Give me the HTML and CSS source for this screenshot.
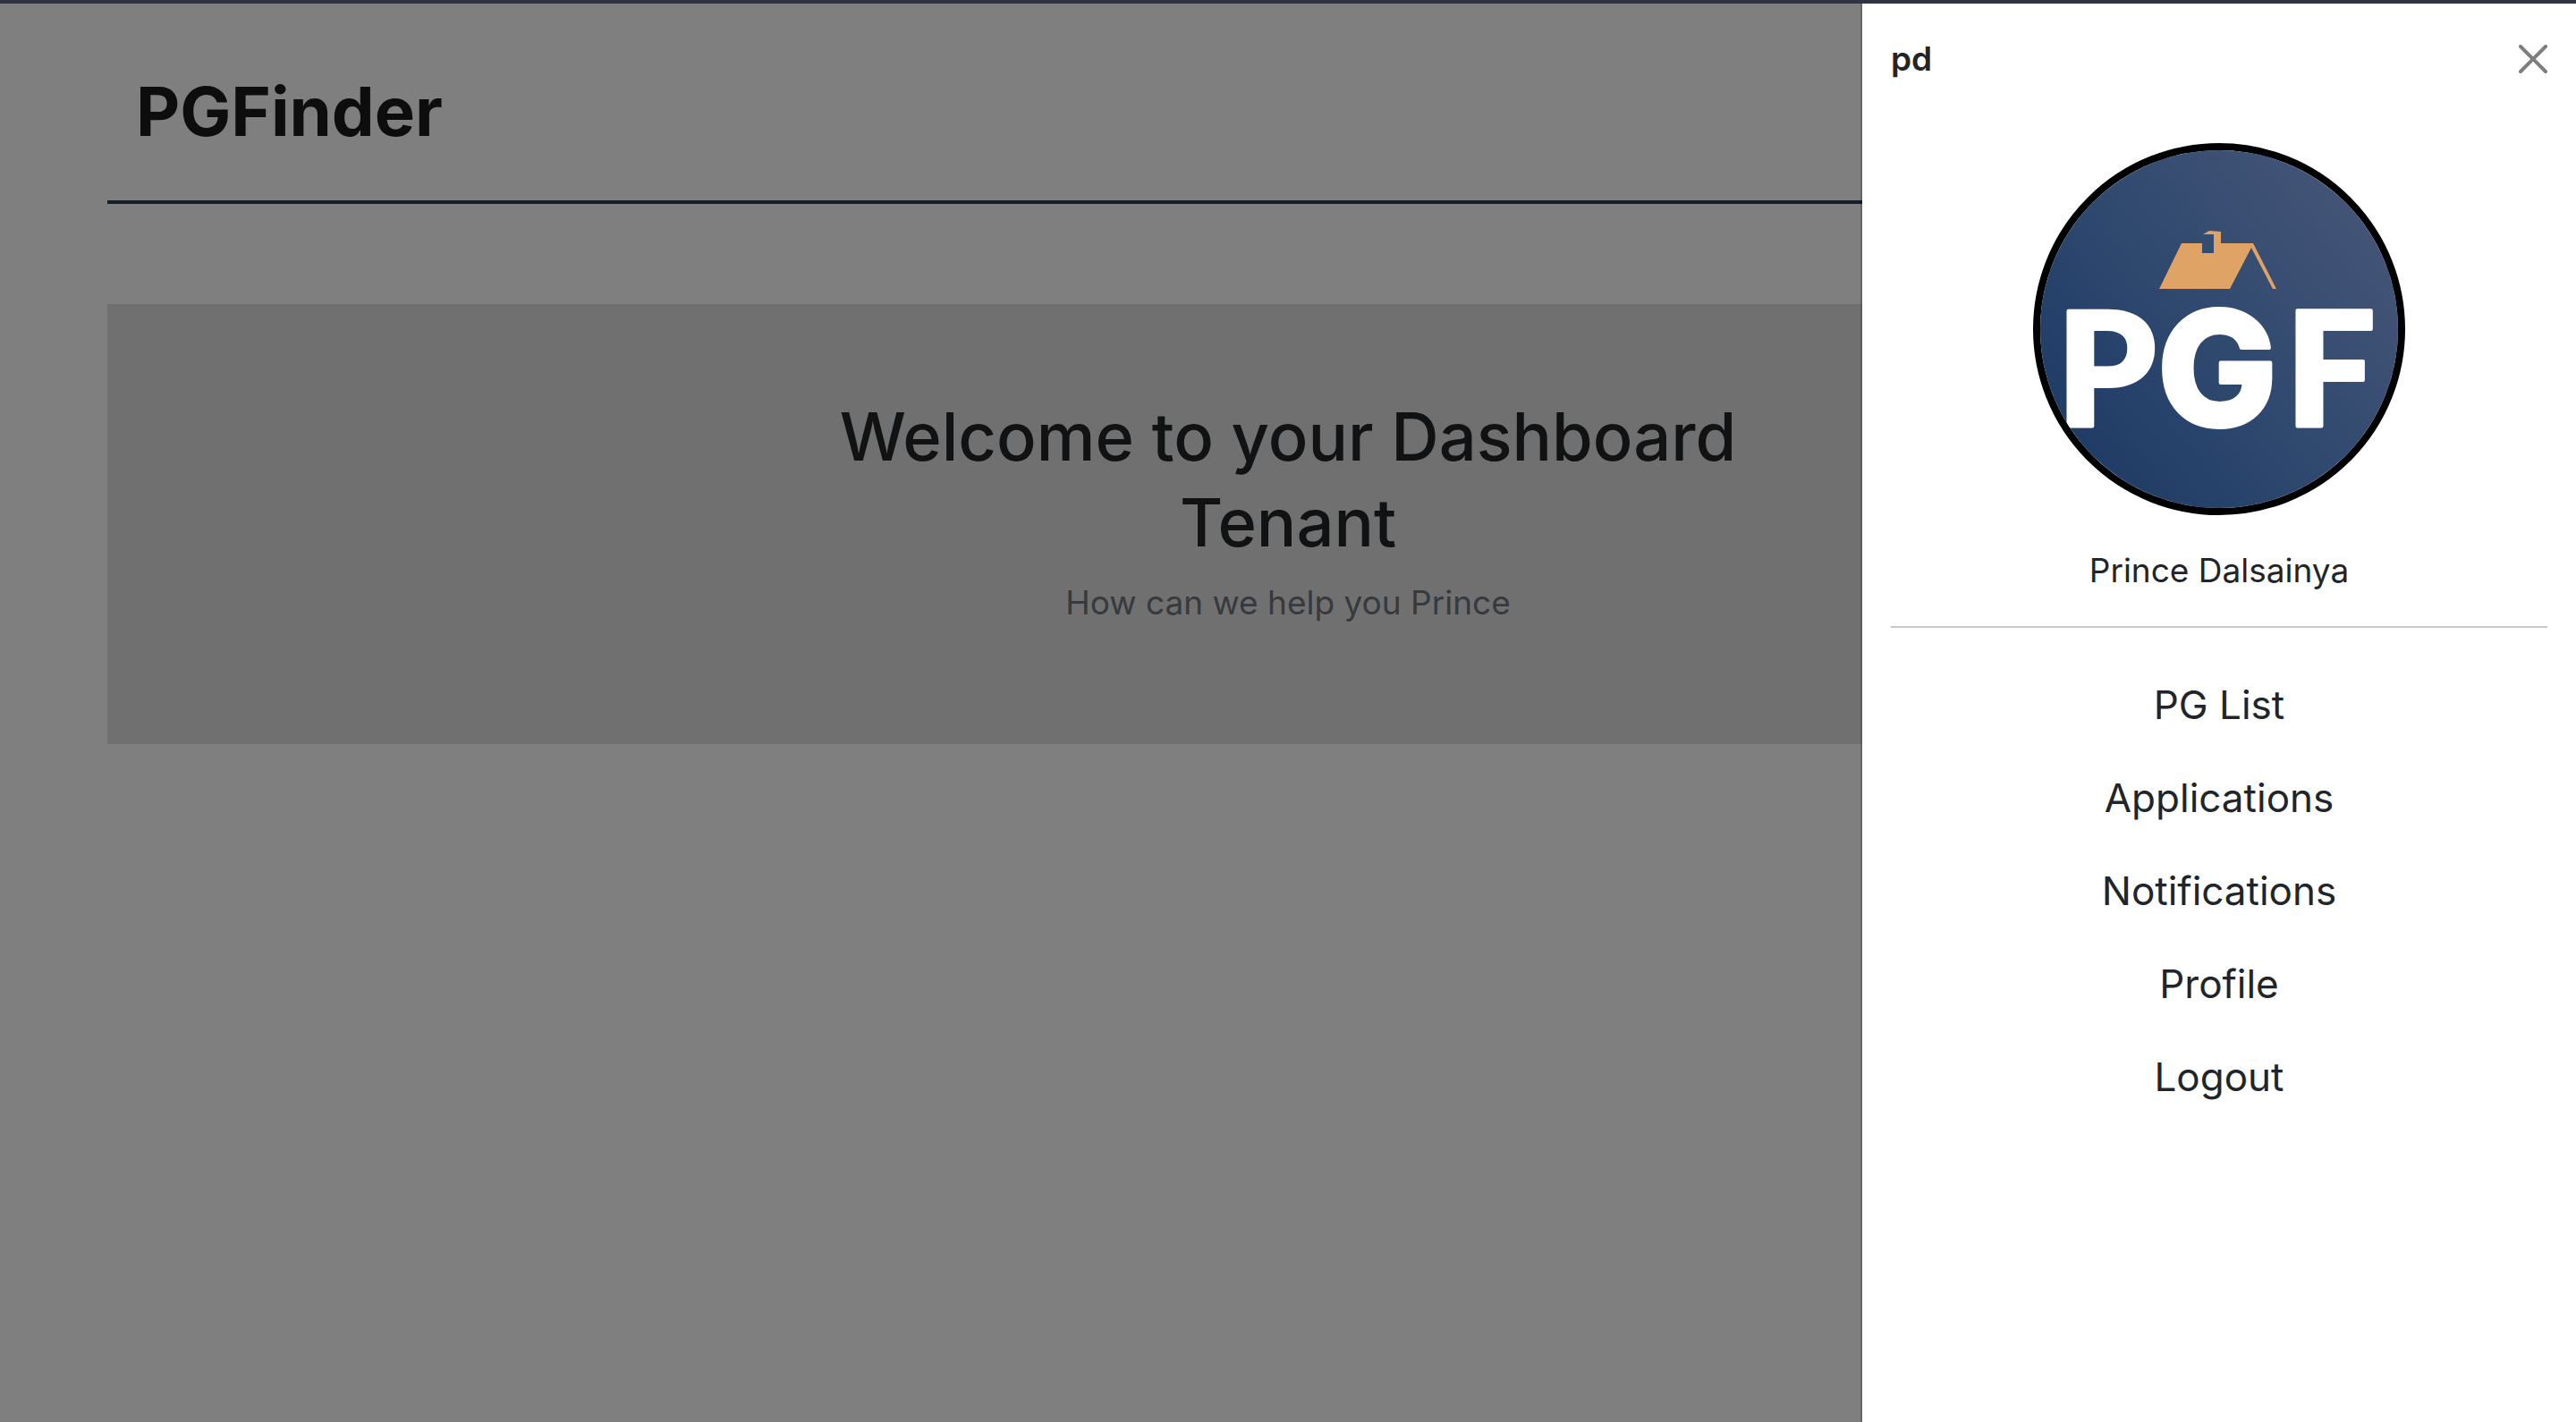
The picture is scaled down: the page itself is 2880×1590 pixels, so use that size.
FILE: index.html
```html
<!DOCTYPE html>
<html lang="en">
<head>
<meta charset="utf-8">
<title>PGFinder</title>
<link rel="stylesheet" href="styles.css">
</head>
<body>
<div class="page">
  <header class="site-header">
    <h1 class="brand">PGFinder</h1>
  </header>
  <main class="hero">
    <h2 class="hero-title">Welcome to your Dashboard<br>Tenant</h2>
    <p class="hero-text">How can we help you Prince</p>
  </main>
</div>
<div class="backdrop"></div>
<aside class="drawer" aria-labelledby="drawer-title">
  <div class="drawer-header">
    <h2 class="drawer-title" id="drawer-title">pd</h2>
    <button class="close" type="button" aria-label="Close">
      <svg class="close-icon" viewBox="0 0 16 16" aria-hidden="true"><path d="M.293.293a1 1 0 0 1 1.414 0L8 6.586 14.293.293a1 1 0 1 1 1.414 1.414L9.414 8l6.293 6.293a1 1 0 0 1-1.414 1.414L8 9.414l-6.293 6.293a1 1 0 0 1-1.414-1.414L6.586 8 .293 1.707a1 1 0 0 1 0-1.414z"/></svg>
    </button>
  </div>
  <div class="drawer-body">
    <svg class="avatar" viewBox="0 0 400 400" role="img" aria-label="PGF">
      <defs>
        <linearGradient id="sky" x1="0.1" y1="0.85" x2="0.9" y2="0.2">
          <stop offset="0" stop-color="#1f3c66"/>
          <stop offset="0.5" stop-color="#30496f"/>
          <stop offset="1" stop-color="#435476"/>
        </linearGradient>
      </defs>
      <rect width="400" height="400" fill="url(#sky)"/>
      <path fill="#dfa366" d="M133 155 158 104H181V115H194V94H182L189 90 202 91V104H238L264 155H260L236 109 212 155Z"/>
      <text class="logo-text" y="308" x="18 131 274">P<tspan class="logo-round">G</tspan>F</text>
    </svg>
    <p class="user-name">Prince Dalsainya</p>
    <hr class="divider">
    <nav class="menu">
      <a class="menu-link" href="#pg-list">PG List</a>
      <a class="menu-link" href="#applications">Applications</a>
      <a class="menu-link" href="#notifications">Notifications</a>
      <a class="menu-link" href="#profile">Profile</a>
      <a class="menu-link" href="#logout">Logout</a>
    </nav>
  </div>
</aside>
</body>
</html>
```

FILE: styles.css
```css
* { box-sizing: border-box; }

body {
  margin: 0;
  border-top: 4px solid #2f3344;
  background: #fff;
  color: #212529;
  font-family: Inter, "Liberation Sans", sans-serif;
  font-size: 37px;
  line-height: 60px;
}

h1, h2, p { margin: 0; }

.page { padding: 0 120px; }

.site-header {
  padding: 72px 32px 52px;
  border-bottom: 4px solid #2c3e50;
}

.brand {
  color: #1a1a1a;
  font-size: 76px;
  font-weight: 700;
  line-height: 96px;
}

.hero {
  margin-top: 112px;
  padding: 100px 96px 128px;
  background: #e0e0e0;
  text-align: center;
}

.hero-title {
  margin-bottom: 12px;
  font-size: 74px;
  font-weight: 500;
  line-height: 96px;
}

.hero-text { color: #6c757d; }

.backdrop {
  position: fixed;
  inset: 4px 0 0;
  background: rgba(0, 0, 0, 0.5);
}

.drawer {
  position: fixed;
  inset: 4px 0 0 auto;
  width: 800px;
  border-left: 2px solid rgba(0, 0, 0, 0.2);
  background: #fff;
  background-clip: padding-box;
}

.drawer-header {
  display: flex;
  align-items: center;
  justify-content: space-between;
  padding: 32px;
}

.drawer-title {
  font-size: 37px;
  font-weight: 600;
}

.close {
  display: flex;
  padding: 0;
  border: 0;
  background: none;
  opacity: 0.5;
}

.close-icon {
  width: 32px;
  height: 32px;
}

.drawer-body {
  padding: 32px;
  text-align: center;
}

.avatar {
  display: block;
  width: 416px;
  height: 416px;
  margin: 0 auto 32px;
  border: 8px solid #000;
  border-radius: 50%;
}

.logo-text {
  fill: #fff;
  stroke: #fff;
  stroke-width: 4px;
  stroke-linejoin: round;
  font-family: Lato, Inter, sans-serif;
  font-size: 178px;
  font-weight: 900;
}

.logo-round {
  font-family: Inter, sans-serif;
  font-weight: 800;
}

.divider {
  height: 2px;
  margin: 32px 0;
  border: 0;
  background: #c8c9ca;
}

.menu {
  display: flex;
  flex-direction: column;
  align-items: center;
  gap: 32px;
  padding: 18px 0;
}

.menu-link {
  color: #212529;
  font-size: 44px;
  line-height: 72px;
  text-decoration: none;
}
```
